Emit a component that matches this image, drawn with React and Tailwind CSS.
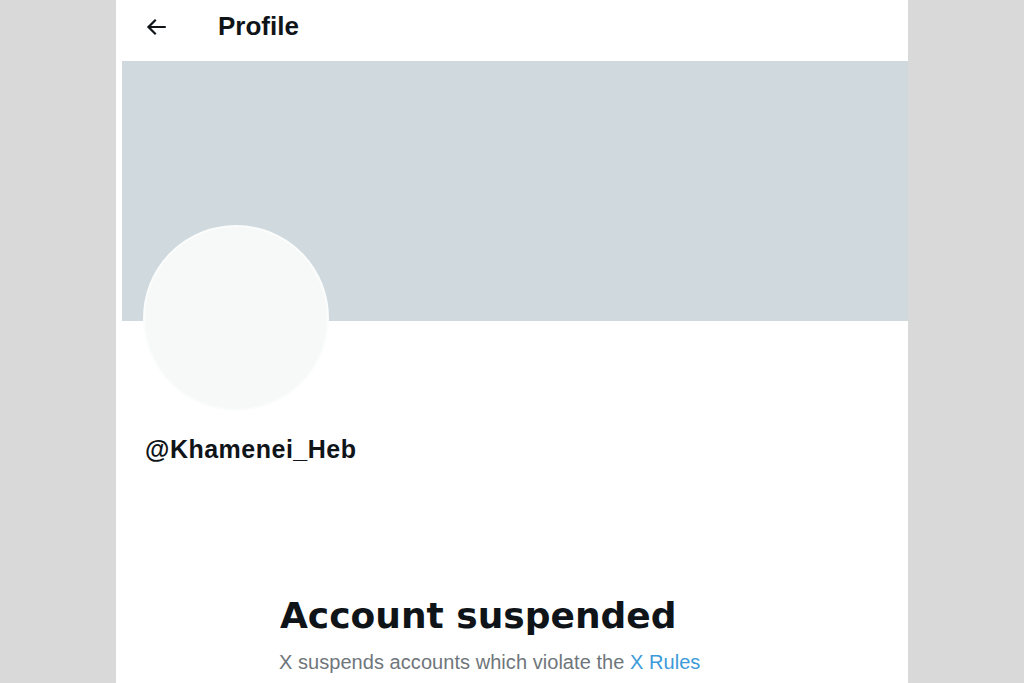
import React from 'react';

const BackArrow = () => (
    <svg viewBox="0 0 24 24" className="w-[26px] h-[26px] fill-[#0f1419]">
        <path d="M7.414 13l5.043 5.04-1.414 1.42L3.586 12l7.457-7.46 1.414 1.42L7.414 11H21v2H7.414z" />
    </svg>
);

export default function App() {
    return (
        <div className="w-[1024px] h-[683px] bg-[#d9d9d9] flex overflow-hidden" style={{ fontFamily: '"Liberation Sans", Arial, sans-serif' }}>
            <div className="ml-[116px] w-[792px] h-full bg-white pl-[6px] flex flex-col">
                {/* Header */}
                <div className="h-[61px] flex items-center">
                    <div className="ml-[21px] mt-[-8px]">
                        <BackArrow />
                    </div>
                    <h1 className="ml-[49px] mt-[-10px] text-[26px] font-bold text-[#0f1419] leading-[30px]">Profile</h1>
                </div>

                {/* Banner */}
                <div className="h-[260px] bg-[#cfd9de] shrink-0"></div>

                {/* Avatar */}
                <div className="ml-[21px] -mt-[96px] w-[186px] h-[186px] rounded-full bg-[#f7f9f9] border-2 border-[#fbfcfc] shrink-0"></div>

                {/* Handle */}
                <div className="ml-[23px] mt-[23px] text-[25px] leading-[30px] font-bold text-[#0f1419] tracking-[0.5px]">
                    @Khamenei_Heb
                </div>

                {/* Suspended message */}
                <div className="ml-[158px] mt-[132px]">
                    <h2 className="text-[36px] leading-[40px] font-bold text-[#0f1419]" style={{ fontFamily: '"DejaVu Sans", sans-serif' }}>
                        Account suspended
                    </h2>
                    <p className="mt-[14px] -ml-[1px] text-[20px] leading-[24px] text-[#6f767b] tracking-[0.05px]">
                        X suspends accounts which violate the <span className="text-[#3d9ad9]">X Rules</span>
                    </p>
                </div>
            </div>
        </div>
    );
}
